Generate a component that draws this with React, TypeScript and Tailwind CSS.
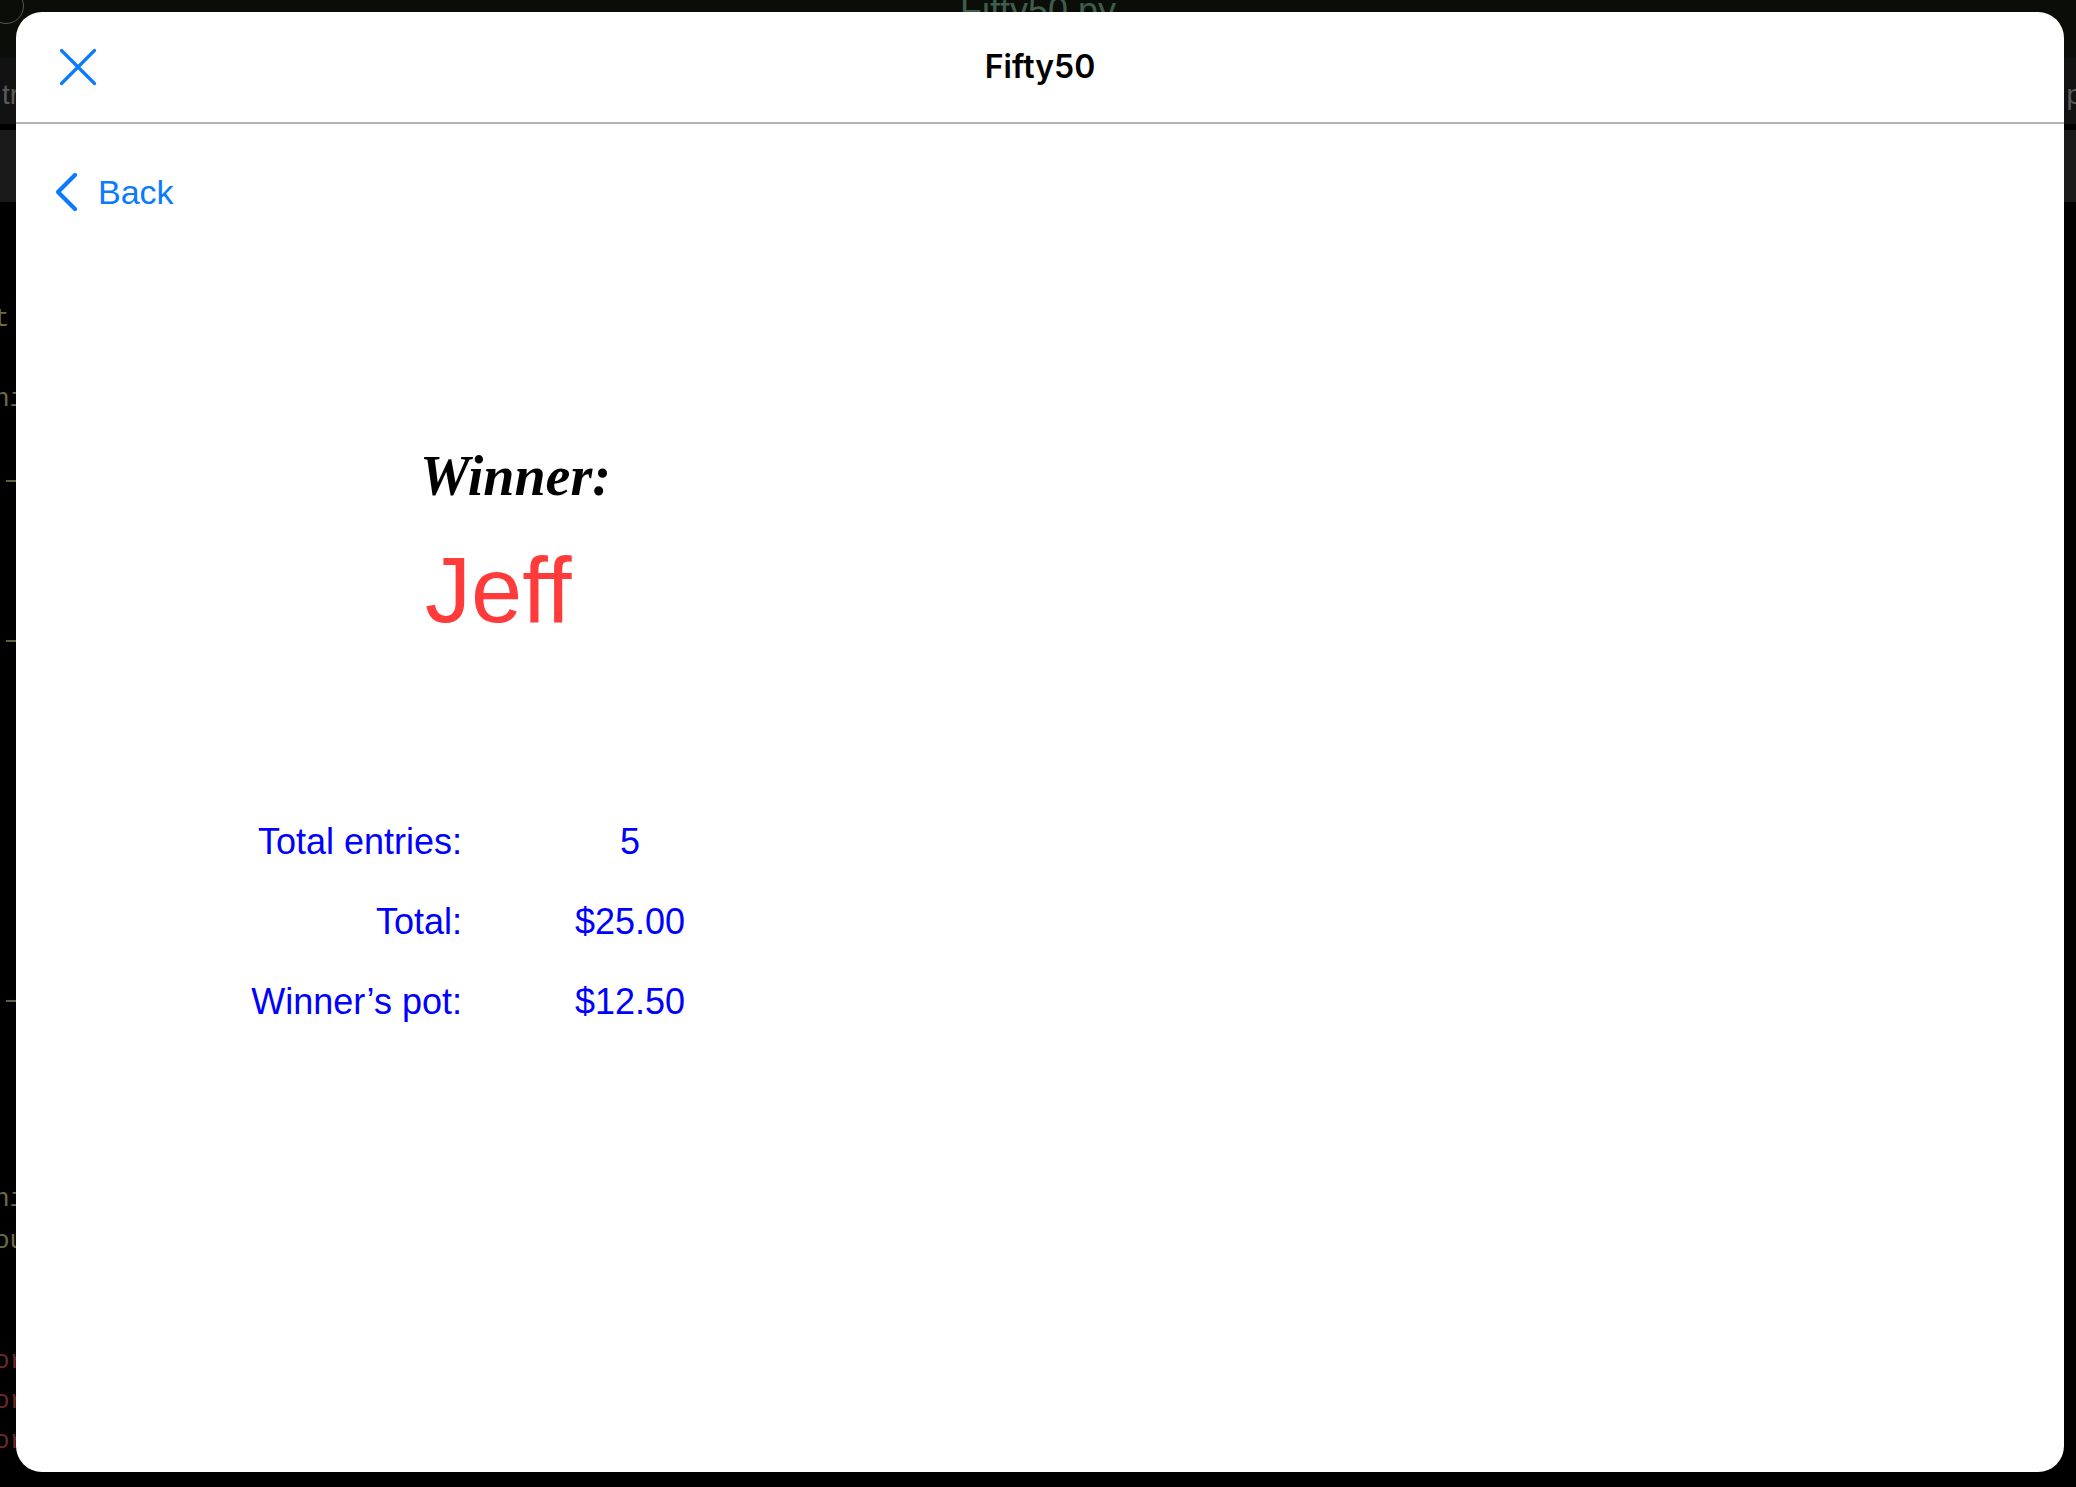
import React from "react";

const stats = [
  { label: "Total entries:", value: "5" },
  { label: "Total:", value: "$25.00" },
  { label: "Winner\u2019s pot:", value: "$12.50" },
];

// code editor fragments that peek out from behind the sheet on the left edge
const leftCode = [
  { top: "top-[300px]", text: "t", color: "text-[#6b6a48]" },
  { top: "top-[380px]", text: "ni", color: "text-[#6b6a48]" },
  { top: "top-[1180px]", text: "ni", color: "text-[#6b6a48]" },
  { top: "top-[1222px]", text: "ou", color: "text-[#6b6a48]" },
  { top: "top-[1342px]", text: "or", color: "text-[#6a2a26]" },
  { top: "top-[1382px]", text: "or", color: "text-[#6a2a26]" },
  { top: "top-[1422px]", text: "or", color: "text-[#6a2a26]" },
];

function EditorBackdrop() {
  return (
    <div aria-hidden="true" className="pointer-events-none absolute inset-0 overflow-hidden bg-black font-['Liberation_Mono',monospace]">
      <div className="flex h-[58px] justify-center bg-[#0b0d08]">
        <p className="-mt-[16px] font-['Liberation_Sans',sans-serif] text-[36px] text-[#3e5d4c]">Fifty50.py</p>
      </div>
      <div className="h-[66px] bg-[#121212]" />
      <div className="mt-[6px] h-[72px] bg-[#1a1a1a]" />
      <div className="absolute left-[-12px] top-[-12px] h-[36px] w-[36px] rounded-full border border-[#555]" />
      <p className="absolute left-[2px] top-[74px] font-['Liberation_Sans',sans-serif] text-[28px] text-[#5a5a5a]">tr</p>
      <p className="absolute right-[-6px] top-[74px] font-['Liberation_Sans',sans-serif] text-[28px] text-[#5a5a5a]">p</p>
      {leftCode.map((c, i) => (
        <p key={i} className={`absolute left-[-6px] text-[26px] ${c.top} ${c.color}`}>
          {c.text}
        </p>
      ))}
      <div className="absolute left-[6px] top-[480px] h-[2px] w-[10px] bg-[#5f5e40]" />
      <div className="absolute left-[6px] top-[640px] h-[2px] w-[10px] bg-[#5f5e40]" />
      <div className="absolute left-[6px] top-[1000px] h-[2px] w-[10px] bg-[#5f5e40]" />
    </div>
  );
}

export default function App() {
  return (
    <div className="relative flex h-[1487px] w-[2076px] flex-col overflow-hidden pb-[15px] pl-[16px] pr-[12px] pt-[12px]">
      <EditorBackdrop />

      <div className="relative flex flex-1 flex-col overflow-hidden rounded-[26px] bg-white">
        {/* Navigation bar */}
        <div className="flex h-[112px] shrink-0 items-center border-b-2 border-[#b4b4b4] px-[43px]">
          <button className="flex h-[38px] w-[38px] items-center justify-center">
            <svg width="38" height="38" viewBox="0 0 38 38" fill="none" stroke="#0a7aff" strokeWidth="3.2" strokeLinecap="round">
              <path d="M2.5 2.5 L35.5 35.5 M35.5 2.5 L2.5 35.5" />
            </svg>
          </button>
          <h1 className="flex-1 text-center font-['Inter',sans-serif] text-[32px] font-semibold leading-[40px] text-black">Fifty50</h1>
          <div className="w-[38px]" />
        </div>

        <div className="flex flex-col pl-[37px] pt-[48px]">
          <button className="flex h-[40px] items-center gap-[19px] self-start font-['Liberation_Sans',sans-serif] text-[34px] leading-[40px] text-[#0a7aff]">
            <svg width="26" height="40" viewBox="0 0 26 40" fill="none" stroke="#0a7aff" strokeWidth="4.2" strokeLinecap="round" strokeLinejoin="round">
              <path d="M22 3 L5 20 L22 37" />
            </svg>
            <span>Back</span>
          </button>

          {/* Winner */}
          <div className="ml-[367px] mt-[232px] flex flex-col">
            <p className="font-['Liberation_Serif',serif] text-[56px] font-bold italic leading-[64px] text-black">Winner:</p>
            <p className="ml-[5px] mt-[32px] font-['Liberation_Sans',sans-serif] text-[92px] leading-[100px] text-[#ff3b3b]">Jeff</p>
          </div>

          {/* Summary */}
          <div className="ml-[187px] mt-[162px] grid grid-cols-[222px_200px] gap-x-[68px] font-['Liberation_Sans',sans-serif] text-[36px] leading-[80px] text-[#0000ff]">
            {stats.map((s) => (
              <React.Fragment key={s.label}>
                <span className="text-right">{s.label}</span>
                <span className="text-center">{s.value}</span>
              </React.Fragment>
            ))}
          </div>
        </div>
      </div>
    </div>
  );
}
